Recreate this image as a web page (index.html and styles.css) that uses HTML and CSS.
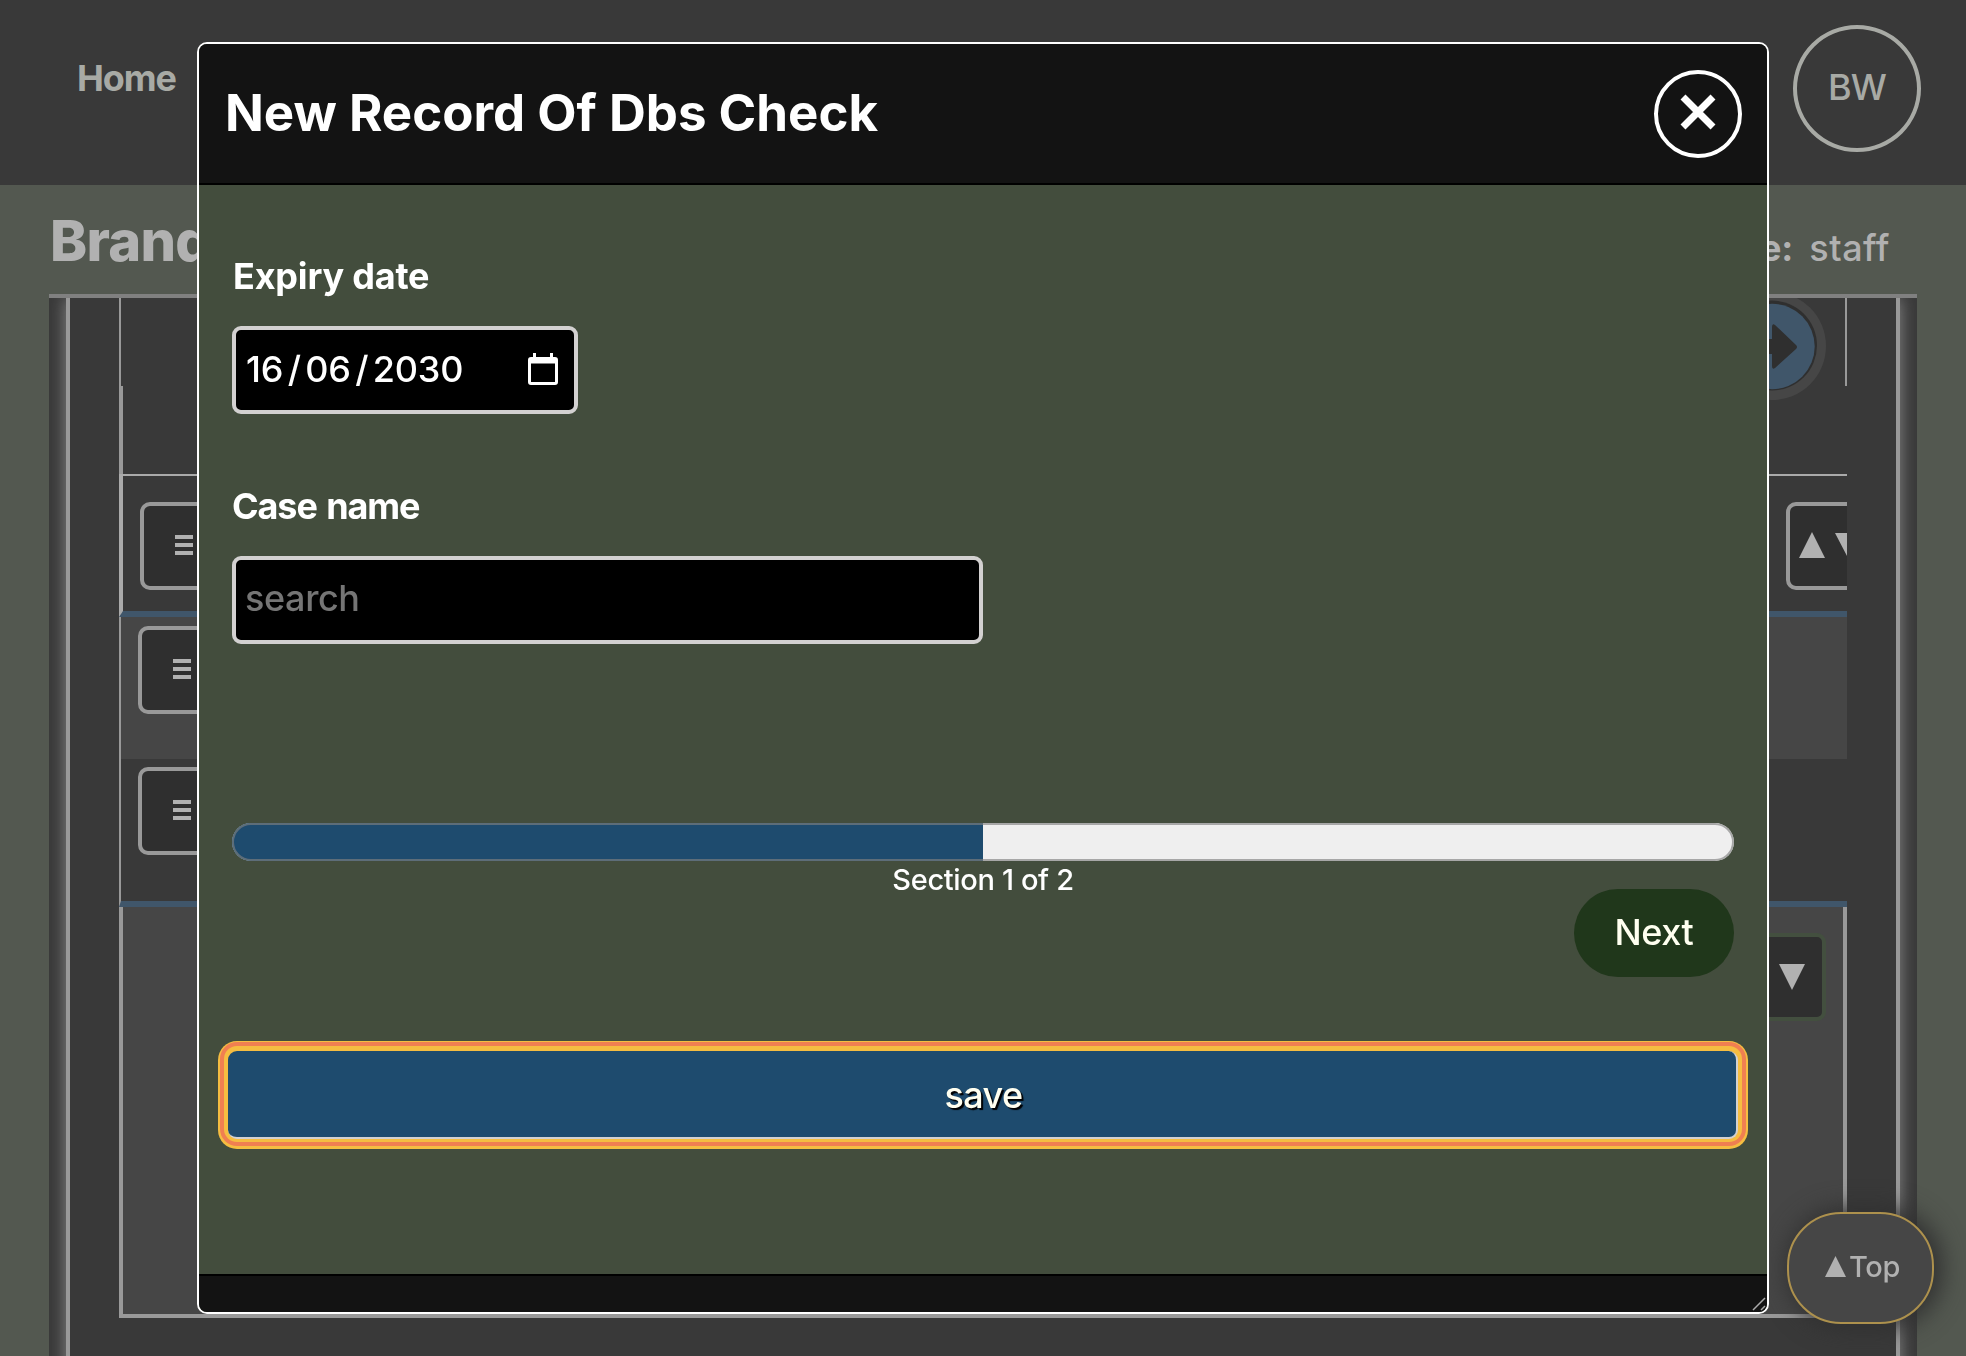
FILE: index.html
```html
<!DOCTYPE html>
<html lang="en">
<head>
<meta charset="utf-8">
<title>New Record Of Dbs Check</title>
<link rel="stylesheet" href="styles.css">
</head>
<body>
<header class="topbar">
  <a class="nav-link">Home</a>
  <div class="avatar">BW</div>
</header>
<main class="page">
  <div class="page-head">
    <h1 class="page-title">Brand</h1>
    <p class="role"><b>Role:</b><span>staff</span></p>
  </div>
  <section class="frame">
    <div class="panel">
      <div class="strip">
        <svg class="go" viewBox="0 0 108 108"><circle cx="54" cy="54" r="54" fill="#464646"/><circle cx="54" cy="53.500" r="45" fill="#2f2f2f"/><circle cx="54" cy="54.500" r="42.700" fill="#40566a"/><path d="M30 47h24V35q0-4 3-2l21 20q2 2 0 4L57 76q-3 2-3-2V62H30z" fill="#2f2f2f"/></svg>
      </div>
      <div class="gap-row"></div>
      <div class="row row-head">
        <div class="tool"><i class="bars"></i></div>
        <div class="tool sort"><svg viewBox="0 0 64 26"><path d="M0 26 13 0l13 26zM36 1h26L49 26z" fill="#b1b1b1"/></svg></div>
      </div>
      <div class="row row-a"><div class="tool"><i class="bars"></i></div></div>
      <div class="row row-b"><div class="tool"><i class="bars"></i></div></div>
      <div class="row-foot">
        <div class="select"><svg viewBox="0 0 26 26"><path d="M0 0h26L13 26z" fill="#b1b1b1"/></svg></div>
      </div>
    </div>
  </section>
</main>
<a class="to-top"><svg viewBox="0 0 21 21"><path d="M0 21 10.500 0 21 21z" fill="#b1b1b1"/></svg><span>Top</span></a>
<div class="modal">
  <div class="modal-head">
    <h2>New Record Of Dbs Check</h2>
    <button class="close"><svg viewBox="0 0 36 36"><path d="M3 3 33 33M33 3 3 33" stroke="#fff" stroke-width="7"/></svg></button>
  </div>
  <div class="modal-body">
    <label class="lbl">Expiry date</label>
    <div class="field date"><span>16</span><span class="slash">/</span><span>06</span><span class="slash">/</span><span>2030</span>
      <svg viewBox="0 0 30 32"><path d="M5 0h3v4h14V0h3v4h2q3 0 3 3v22q0 3-3 3H3q-3 0-3-3V7q0-3 3-3h2zM3 10.500v18.500h24V10.500z" fill="#fff" fill-rule="evenodd"/></svg></div>
    <label class="lbl lbl-case">Case name</label>
    <div class="field search"><span>search</span></div>
    <div class="progress"><div class="bar"></div></div>
    <p class="step">Section 1 of 2</p>
    <button class="next">Next</button>
    <button class="save">save</button>
  </div>
  <div class="modal-foot"><svg viewBox="0 0 14 14"><path d="M1 13 13 1M9 13l4-4" stroke="#aaa" stroke-width="1.500"/></svg></div>
</div>
</body>
</html>
```
FILE: styles.css
```css
* { box-sizing: border-box; }
body {
  margin: 0;
  height: 1356px;
  overflow: hidden;
  background: #535850;
  color: #b1b1b1;
  font: 500 36px/44px Inter, "Liberation Sans", sans-serif;
}
h1, h2, p { margin: 0; }
svg { display: block; flex: none; }
button { font: inherit; border: 0; padding: 0; }
.topbar {
  height: 185px;
  padding: 25px 45px 0 76px;
  background: #393939;
  color: #a8aaa5;
  display: flex;
  justify-content: space-between;
}
.nav-link { margin: 31px 0 0 1px; font-weight: 650; letter-spacing: -1.1px; }
.avatar {
  width: 128px;
  height: 127px;
  padding-bottom: 3px;
  border: 4px solid #a8aaa5;
  border-radius: 50%;
  display: flex;
  align-items: center;
  justify-content: center;
  font-weight: 480;
  letter-spacing: -.9px;
}
.page { padding: 0 49px; }
.page-head { height: 109px; display: flex; justify-content: space-between; padding: 22px 27px 0 1px; }
.page-title { font-size: 56px; line-height: 68px; font-weight: 800; letter-spacing: -.7px; }
.role { display: flex; gap: 16px; margin-top: 19px; font-weight: 470; }
.role span { letter-spacing: .5px; }
.role b { font-weight: 700; }
.frame {
  height: 1062px;
  border-top: 4px solid #808080;
  background: #393939;
  padding: 0 17px;
  overflow: hidden;
}
.panel {
  height: 1100px;
  border: solid #999;
  border-width: 0 4px;
  padding: 0 49px;
  box-shadow: 0 0 16px #8a8a8a;
  background: #393939;
}
.strip {
  height: 88px;
  border: solid #999;
  border-width: 0 2px;
  padding: 0 19px 0 0;
  display: flex;
  justify-content: flex-end;
}
.go { width: 108px; height: 108px; margin-top: -6px; }
.gap-row { height: 88px; border-left: 4px solid #999; }
.row { display: flex; justify-content: space-between; align-items: flex-start; border-left: 2px solid #999; overflow: hidden; }
.row-head { height: 143px; border-left: 4px solid #aaa; border-top: 2px solid #aaa; border-bottom: 6px solid #40566a; padding: 26px 0 0 17px; }
.row-a { height: 142px; background: #464646; padding: 9px 0 0 17px; }
.row-b { height: 148px; border-bottom: 6px solid #40566a; padding: 8px 0 0 17px; }
.tool {
  width: 88px;
  height: 88px;
  border: 4px solid #999;
  border-radius: 10px;
  background: #2f2f2f;
  padding: 29px 0 0 31px;
}
.bars { display: block; width: 18px; height: 20px; background: repeating-linear-gradient(#b1b1b1 0 4px, transparent 4px 8px); }
.sort { width: 100px; margin-right: -39px; padding: 26px 0 0 9px; }
.sort svg { width: 64px; height: 26px; }
.row-foot {
  height: 411px;
  border: 4px solid #999;
  border-top: 0;
  background: #464646;
  padding: 26px 17px 0 0;
  display: flex;
  justify-content: flex-end;
}
.select {
  width: 200px;
  height: 88px;
  border: 4px solid #434f3f;
  border-radius: 9px;
  background: #2f2f2f;
  display: flex;
  justify-content: flex-end;
  padding: 27px 17px 0 0;
}
.select svg { width: 26px; height: 26px; }
.to-top {
  position: fixed;
  left: 1787px;
  top: 1212px;
  width: 147px;
  height: 112px;
  border: 2px solid #ad914d;
  border-radius: 54px;
  background: #464646;
  box-shadow: 4px 0 24px 4px #303030;
  display: flex;
  align-items: center;
  padding: 0 0 3px 36px;
  gap: 3px;
  font-size: 29px;
  font-weight: 470;
  letter-spacing: -.3px;
}
.to-top svg { width: 21px; height: 21px; }
.modal {
  position: fixed;
  left: 197px;
  top: 42px;
  width: 1572px;
  height: 1272px;
  border: 2px solid #fff;
  border-radius: 10px;
  overflow: hidden;
  background: #434d3d;
  color: #fff;
  display: flex;
  flex-direction: column;
}
.modal-head {
  height: 141px;
  background: #131313;
  border-bottom: 2px solid #000;
  padding: 26px 25px 0 25px;
  display: flex;
  justify-content: space-between;
}
.modal-head h2 { font-size: 51px; line-height: 60px; margin: 13px 0 0 1px; font-weight: 740; }
.close {
  width: 88px;
  height: 88px;
  border: 4px solid #fff;
  border-radius: 50%;
  background: none;
  padding: 18px 22px 22px;
}
.close svg { width: 36px; height: 36px; }
.modal-body { flex: 1; padding: 69px 33px 0; display: flex; flex-direction: column; }
.lbl { font-weight: 670; height: 72px; padding-left: 1px; letter-spacing: -.2px; }
.lbl-case { margin-top: 70px; padding-left: 0; letter-spacing: -1.1px; word-spacing: 2px; }
.field {
  height: 88px;
  flex: none;
  border: 4px solid #d3d1d1;
  border-radius: 9px;
  background: #000;
  display: flex;
  align-items: center;
  padding: 0 0 2px 10px;
  font-weight: 480;
}
.date { width: 346px; padding-right: 16px; letter-spacing: -.2px; }
.date svg { width: 30px; height: 32px; margin-left: auto; }
.slash { width: 22px; text-align: center; }
.search { width: 751px; color: #757575; padding: 0 0 4px 9px; letter-spacing: -.4px; }
.progress {
  height: 38px;
  flex: none;
  margin-top: 179px;
  border-radius: 19px;
  overflow: hidden;
  background: #efefef;
  position: relative;
}
.progress::after { content: ""; position: absolute; inset: 0; border: 2px solid rgba(128, 128, 128, .65); border-radius: 19px; }
.bar { width: 50%; height: 100%; background: #1e4b6e; }
.step { height: 28px; line-height: 38px; font-size: 29px; text-align: center; letter-spacing: -.35px; }
.next {
  align-self: flex-end;
  width: 160px;
  height: 88px;
  padding-bottom: 2px;
  border-radius: 44px;
  background: #20371b;
  color: #fffff0;
  letter-spacing: -.4px;
}
.save {
  flex: none;
  height: 88px;
  margin: 74px -4px 0;
  padding: 2px 0 0 3px;
  border: solid #d3d1d1;
  border-width: 0 2px 2px 0;
  border-radius: 9px;
  background: #1e4b6e;
  color: #fffff0;
  letter-spacing: -.6px;
  text-shadow: 2px 2px 1px #000;
  box-shadow: 0 -1px 0 4px #f5bd41, 0 -1px 0 8px #f07f51, 0 0 0 10px #f5bd41;
}
.modal-foot {
  height: 38px;
  border-top: 2px solid #000;
  background: #131313;
  display: flex;
  justify-content: flex-end;
  align-items: flex-end;
  padding: 0 1px 1px 0;
}
.modal-foot svg { width: 14px; height: 14px; }
```
